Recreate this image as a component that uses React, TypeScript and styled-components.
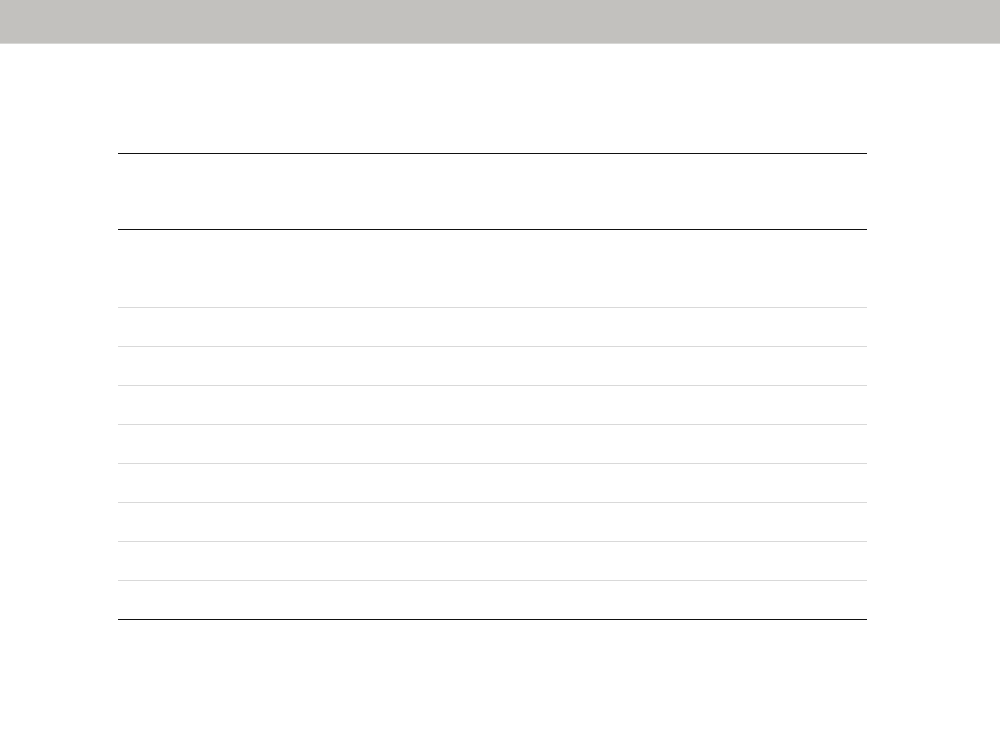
import React from "react";
import styled, { createGlobalStyle } from "styled-components";

const Global = createGlobalStyle`
  html, body { margin: 0; padding: 0; background: #ffffff; }
  body { font-family: "Liberation Sans", Arial, sans-serif; }
`;

const TopBar = styled.header`
  height: 43px;
  background: #c2c1be;
  border-bottom: 1px solid #d7d7d5;
`;

const Main = styled.main`
  padding: 109px 133px 0 118px;
`;

const Table = styled.table`
  width: 749px;
  border-collapse: collapse;
  border-top: 1px solid #111111;
  border-bottom: 1px solid #111111;
`;

const HeadRow = styled.tr`
  height: 76px;
  border-bottom: 1px solid #111111;
`;

const Row = styled.tr<{ $tall?: boolean }>`
  height: ${(p) => (p.$tall ? "78px" : "39px")};
  & + & { border-top: 1px solid #d9d9d9; }
`;

const Cell = styled.td`
  padding: 0;
`;

const HeadCell = styled.th`
  padding: 0;
`;

export default function App() {
  const rows = Array.from({ length: 9 }, (_, i) => i);
  return (
    <>
      <Global />
      <TopBar />
      <Main>
        <Table>
          <thead>
            <HeadRow>
              <HeadCell />
            </HeadRow>
          </thead>
          <tbody>
            {rows.map((i) => (
              <Row key={i} $tall={i === 0}>
                <Cell />
              </Row>
            ))}
          </tbody>
        </Table>
      </Main>
    </>
  );
}
